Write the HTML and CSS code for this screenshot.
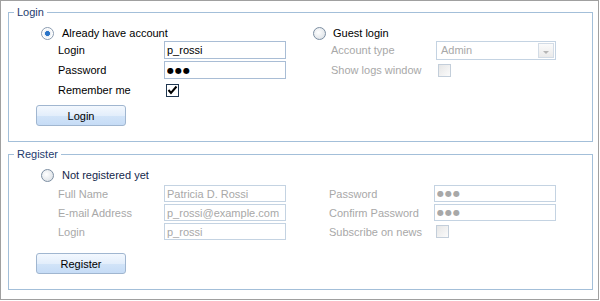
FILE: index.html
```html
<!DOCTYPE html>
<html lang="en">
<head>
  <meta charset="UTF-8">
  <title>Login / Register</title>
  <link rel="stylesheet" href="styles.css">
</head>
<body>

<div class="window">
  <!-- Login group -->
  <fieldset class="group login">
    <legend>Login</legend>
    <div class="cols">
      <div class="col">
        <div class="option"><span class="radio checked"></span>Already have account</div>
        <div class="rows">
          <div class="row"><span class="lbl">Login</span><input class="edit" value="p_rossi"></div>
          <div class="row"><span class="lbl">Password</span><input class="edit pw" value="●●●"></div>
          <div class="row"><span class="lbl">Remember me</span>
            <span class="check checked">
              <svg width="11" height="11" viewBox="0 0 11 11"><path d="M1.5 5 L4 8 L9.5 1.5" fill="none" stroke="#000" stroke-width="2"/></svg>
            </span>
          </div>
        </div>
      </div>
      <div class="col side">
        <div class="option"><span class="radio"></span>Guest login</div>
        <div class="rows off">
          <div class="row"><span class="lbl">Account type</span>
            <div class="combo"><span>Admin</span><span class="drop"><span class="arrow"></span></span></div>
          </div>
          <div class="row"><span class="lbl">Show logs window</span><span class="check"></span></div>
        </div>
      </div>
    </div>
    <button class="btn">Login</button>
  </fieldset>

  <!-- Register group -->
  <fieldset class="group register">
    <legend>Register</legend>
    <div class="cols">
      <div class="col">
        <div class="option dark"><span class="radio"></span>Not registered yet</div>
        <div class="rows off">
          <div class="row"><span class="lbl">Full Name</span><input class="edit" value="Patricia D. Rossi" disabled></div>
          <div class="row"><span class="lbl">E-mail Address</span><input class="edit" value="p_rossi@example.com" disabled></div>
          <div class="row"><span class="lbl">Login</span><input class="edit" value="p_rossi" disabled></div>
        </div>
      </div>
      <div class="col side">
        <div class="rows off">
          <div class="row"><span class="lbl">Password</span><input class="edit pw" value="●●●" disabled></div>
          <div class="row"><span class="lbl">Confirm Password</span><input class="edit pw" value="●●●" disabled></div>
          <div class="row"><span class="lbl">Subscribe on news</span><span class="check"></span></div>
        </div>
      </div>
    </div>
    <button class="btn">Register</button>
  </fieldset>
</div>

</body>
</html>
```

FILE: styles.css
```css
* {
  box-sizing: border-box;
}
body {
  margin: 0;
  font-family: "Liberation Sans", Arial, sans-serif;
  font-size: 11px;
  color: #000;
  background: #fff;
}
.window {
  width: 599px;
  height: 300px;
  border: 1px solid #a0a0a0;
  padding: 4px 5px 9px 7px;
}
.group {
  margin: 0;
  padding: 0;
  border: 1px solid #a3bfd9;
  min-width: 0;
}
.group + .group {
  margin-top: 5px;
}
.login {
  height: 137px;
}
.register {
  height: 143px;
}
.group legend {
  margin-left: 5px;
  padding: 0 3px;
  line-height: 15px;
  color: #1e3c6e;
}
.cols {
  display: flex;
  padding-left: 32px;
  margin-top: 5px;
}
.col {
  width: 272px;
}
.option {
  display: flex;
  align-items: center;
  height: 16px;
}
.option.dark {
  color: #14264a;
}
.radio {
  width: 13px;
  height: 13px;
  margin-right: 8px;
  border-radius: 50%;
  border: 1px solid #7c8ea2;
  background: radial-gradient(circle at 40% 40%, #fff, #e2e6ea 70%, #cdd3da);
  position: relative;
}
.side .radio {
  margin-right: 7px;
}
.radio.checked {
  border-color: #8a9bb0;
  background: radial-gradient(circle, #2a74c8 0, #2a74c8 2.2px, #e9eef4 2.8px, #fff 5px);
}
.rows {
  display: flex;
  flex-direction: column;
  gap: 2px;
  padding-left: 17px;
}
.side .rows {
  padding-left: 18px;
}
.row {
  display: flex;
  align-items: center;
  height: 18px;
}
.lbl {
  width: 106px;
}
.side .lbl {
  width: 105px;
}
.edit {
  width: 122px;
  height: 18px;
  margin: 0;
  padding: 0 2px;
  border: 1px solid #a9bdd5;
  border-radius: 0;
  background: #fff;
  font: inherit;
  color: #000;
  outline: none;
}
.edit.pw {
  font-family: "DejaVu Sans", sans-serif;
  font-size: 8px;
  letter-spacing: 1px;
}
.check {
  width: 13px;
  height: 13px;
  margin-left: 2px;
  border: 1px solid #c3ceda;
  background: linear-gradient(135deg, #e6e6e6, #fbfbfb);
  display: flex;
  align-items: center;
  justify-content: center;
}
.check.checked {
  border-color: #1f3650;
  background: #fff;
}
.off {
  color: #a8a8a8;
}
.off .edit {
  color: #a8a8a8;
  border-color: #c4d3e2;
}
.combo {
  width: 120px;
  height: 19px;
  border: 1px solid #c4d3e2;
  padding: 0 1px 0 4px;
  display: flex;
  align-items: center;
  justify-content: space-between;
}
.drop {
  width: 16px;
  height: 15px;
  border: 1px solid #d3dce6;
  background: linear-gradient(#fbfbfb, #eaeaea);
  display: flex;
  justify-content: center;
  padding-top: 7px;
}
.arrow {
  width: 0;
  height: 0;
  border-left: 3px solid transparent;
  border-right: 3px solid transparent;
  border-top: 3px solid #b5b5b5;
}

/* register group */
.register .rows {
  margin-top: 2px;
}
.register .row,
.register .edit {
  height: 17px;
}
.register .side .rows {
  margin-top: 18px;
  padding-left: 16px;
}
.btn {
  display: block;
  width: 90px;
  height: 21px;
  margin: 6px 0 0 27px;
  padding: 0;
  border: 1px solid #a0b6d0;
  border-radius: 3px;
  background: linear-gradient(#f3f8fe, #e3eefb 50%, #d2e4f8 51%, #c6dcf6);
  font: inherit;
  color: #000;
}
.register .btn {
  margin-top: 13px;
}
```
